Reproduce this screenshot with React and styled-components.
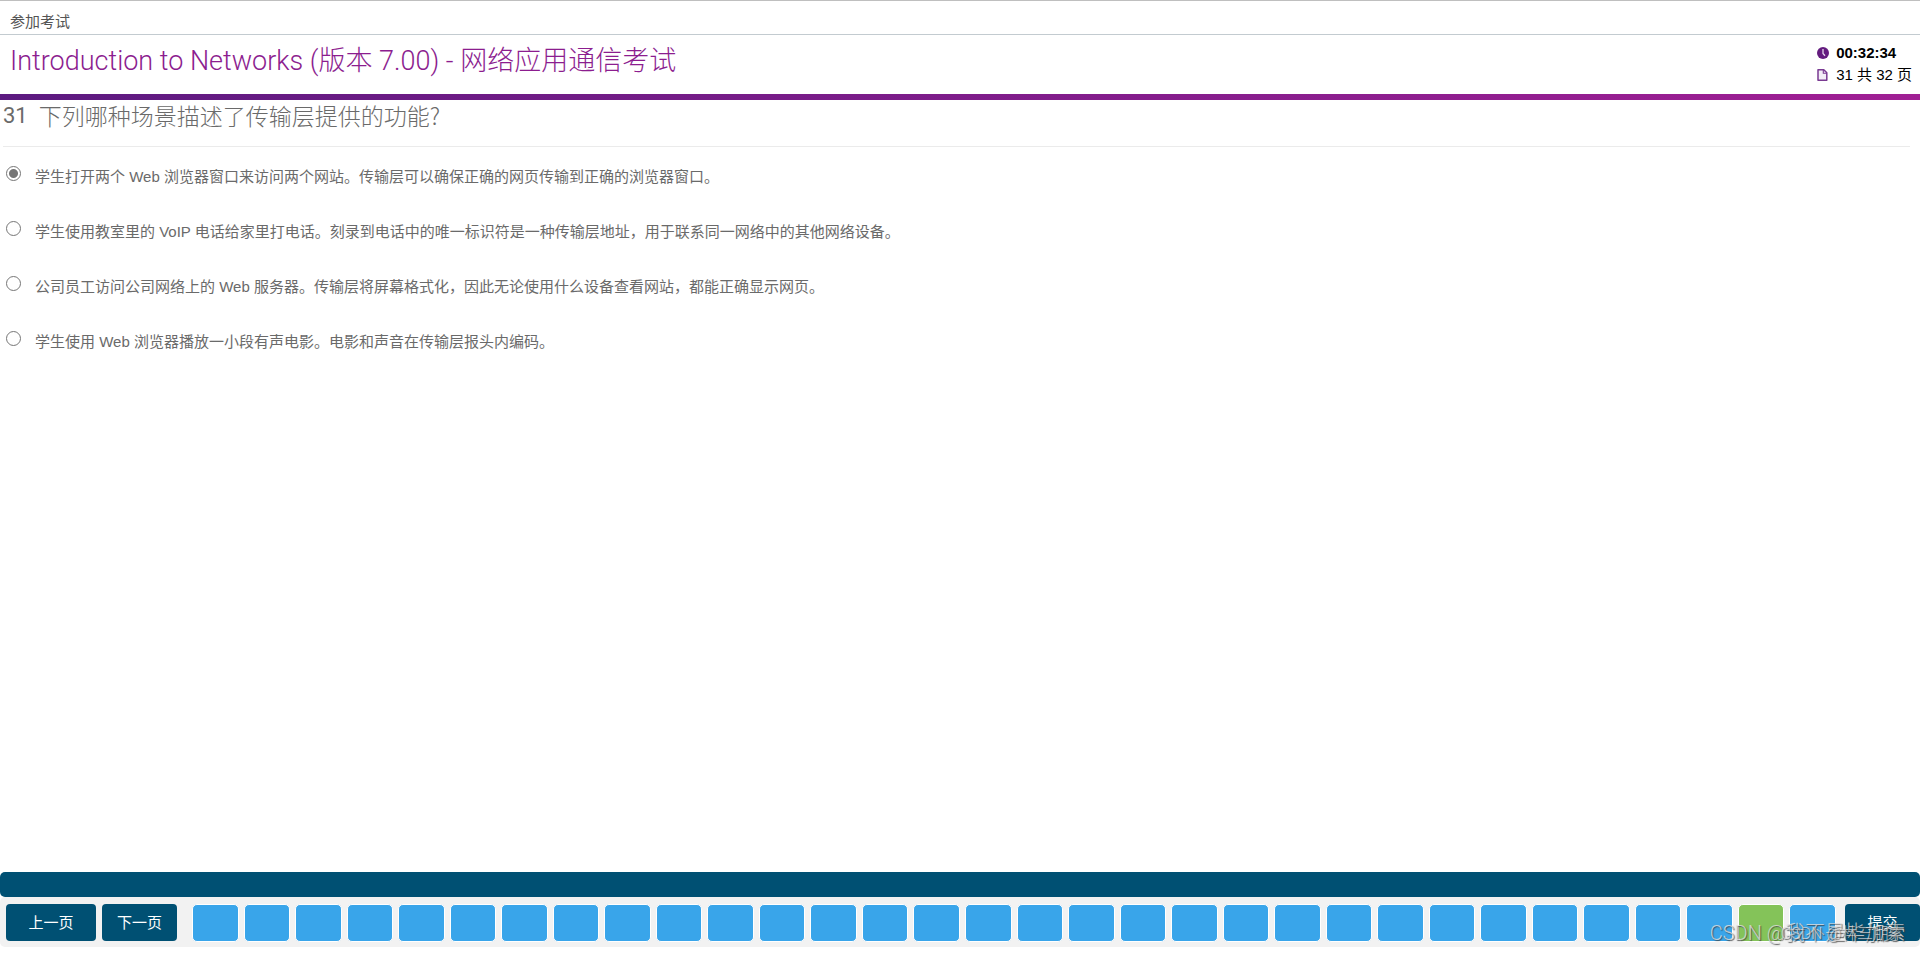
import { useState } from "react";
import styled, { createGlobalStyle } from "styled-components";

const options = [
  "学生打开两个 Web 浏览器窗口来访问两个网站。传输层可以确保正确的网页传输到正确的浏览器窗口。",
  "学生使用教室里的 VoIP 电话给家里打电话。刻录到电话中的唯一标识符是一种传输层地址，用于联系同一网络中的其他网络设备。",
  "公司员工访问公司网络上的 Web 服务器。传输层将屏幕格式化，因此无论使用什么设备查看网站，都能正确显示网页。",
  "学生使用 Web 浏览器播放一小段有声电影。电影和声音在传输层报头内编码。",
];

const pages = Array.from({ length: 32 }, (_, i) => i + 1);

function App() {
  const [answer, setAnswer] = useState(0);
  const [page, setPage] = useState(31);

  return (
    <Page>
      <GlobalStyle />
      <Breadcrumb>参加考试</Breadcrumb>
      <Header>
        <Title>Introduction to Networks (版本 7.00) - 网络应用通信考试</Title>
        <Status>
          <ClockIcon />
          <strong>00:32:34</strong>
          <PageIcon />
          <span>31 共 32 页</span>
        </Status>
      </Header>
      <Question>
        <QuestionHead>
          <QuestionNumber>31</QuestionNumber>
          <QuestionText>下列哪种场景描述了传输层提供的功能?</QuestionText>
        </QuestionHead>
        <Options>
          {options.map((text, i) => (
            <Option key={text}>
              <Radio name="answer" checked={answer === i} onChange={() => setAnswer(i)} />
              <span>{text}</span>
            </Option>
          ))}
        </Options>
      </Question>
      <Footer>
        <FooterBar />
        <Nav>
          <NavButton $wide>上一页</NavButton>
          <NavButton>下一页</NavButton>
          <Cells>
            {pages.map((n) => (
              <Cell key={n} aria-label={`${n}`} $current={n === page} onClick={() => setPage(n)} />
            ))}
          </Cells>
          <NavButton>提交</NavButton>
        </Nav>
        <Watermark>CSDN @我不是毕加索</Watermark>
        <Watermark $small>CSDN @林三朋索</Watermark>
      </Footer>
    </Page>
  );
}

function ClockIcon() {
  return (
    <svg width="12" height="12" viewBox="0 0 12 12">
      <circle cx="6" cy="6" r="6" fill="#641c7f" />
      <path d="M6 2v4.5l2 2.3" stroke="#e6d8ec" strokeWidth="1.3" fill="none" />
    </svg>
  );
}

function PageIcon() {
  return (
    <svg width="12" height="12" viewBox="0 0 12 12">
      <path d="M1 .8h5.8l3 3V11.2H1z" fill="#f3edf6" stroke="#7a3a92" strokeWidth="1.5" strokeLinejoin="round" />
      <path d="M6.3 1v3.3h3.5" fill="none" stroke="#7a3a92" strokeWidth="1.1" />
    </svg>
  );
}

const GlobalStyle = createGlobalStyle`
  * {
    box-sizing: border-box;
  }
  body {
    margin: 0;
    background: #fff;
    color: #6a6a6a;
    font-family: "Liberation Sans", "Noto Sans CJK SC", sans-serif;
    font-size: 15px;
  }
  button {
    font: inherit;
    border: 0;
    cursor: pointer;
  }
`;

const Page = styled.div`
  display: flex;
  flex-direction: column;
  min-height: 100vh;
  border-top: 1px solid #bfbfbf;
`;

const Breadcrumb = styled.div`
  padding: 11px 10px 2px;
  line-height: 20px;
  color: #545454;
  border-bottom: 1px solid #c3cbd0;
`;

const Header = styled.header`
  display: flex;
  justify-content: space-between;
  padding: 7px 8px 14px 10px;
  border-bottom: 6px solid;
  border-image: linear-gradient(90deg, #5c1a80, #a01f94) 1;
`;

const Title = styled.h1`
  margin: 0;
  font-family: Roboto, "Noto Sans CJK SC", sans-serif;
  font-size: 27px;
  font-weight: 300;
  line-height: 38px;
  color: #8c1d8f;
`;

const Status = styled.div`
  display: grid;
  grid-template-columns: 12px auto;
  align-items: center;
  column-gap: 7px;
  line-height: 22px;
  height: 44px;
  margin-bottom: -6px;
  color: #000;
`;

const Question = styled.main`
  flex: 1;
  padding: 0 10px 0 3px;
`;

const QuestionHead = styled.div`
  display: flex;
  gap: 11px;
  height: 47px;
  font-size: 22px;
  line-height: 32px;
  border-bottom: 1px solid #ebebeb;
`;

const QuestionNumber = styled.span`
  font-family: Roboto, sans-serif;
`;

const QuestionText = styled.h2`
  margin: 0;
  font-family: "Noto Sans CJK SC", sans-serif;
  font-size: 23px;
  font-weight: 300;
  line-height: 30px;
`;

const Options = styled.div`
  display: flex;
  flex-direction: column;
  gap: 33px;
  padding: 19px 3px;
`;

const Option = styled.label`
  display: flex;
  align-items: flex-start;
  gap: 14px;
  line-height: 22px;
`;

const Radio = styled.input.attrs({ type: "radio" })`
  appearance: none;
  width: 15px;
  height: 15px;
  margin: 0;
  border: 1px solid #767676;
  border-radius: 50%;
  background: #fff;
  &:checked {
    background: radial-gradient(circle, #767676 4px, #fff 5px);
  }
`;

const Footer = styled.footer`
  position: relative;
  padding-bottom: 6px;
`;

const FooterBar = styled.div`
  height: 25px;
  border-radius: 5px;
  background: #005073;
`;

const Nav = styled.nav`
  display: flex;
  gap: 6px;
  padding: 7px 0 6px 6px;
  border-radius: 5px;
  background: #f2f2f2;
`;

const NavButton = styled.button`
  width: ${({ $wide }) => ($wide ? "90px" : "75px")};
  height: 37px;
  padding: 0 0 2px;
  border-radius: 4px;
  background: #005073;
  color: #fff;
`;

const Cells = styled.div`
  flex: 1;
  display: flex;
  gap: 5px;
  padding: 0 3px 0 9px;
`;

const Cell = styled.button`
  flex: 1;
  height: 38px;
  margin-bottom: -1px;
  border: 1px solid #fff;
  border-radius: 5px;
  background: ${({ $current }) => ($current ? "#84c359" : "#39a5ea")};
`;

const Watermark = styled.span`
  position: absolute;
  right: 15px;
  bottom: ${({ $small }) => ($small ? "7px" : "8px")};
  font-family: Roboto, "Noto Sans CJK SC", sans-serif;
  font-size: ${({ $small }) => ($small ? "16px" : "20px")};
  font-weight: 300;
  line-height: 24px;
  color: rgba(225, 225, 225, 0.8);
  text-shadow: 1px 1px 1px rgba(60, 60, 60, 0.8);
  pointer-events: none;
`;

export default App;
